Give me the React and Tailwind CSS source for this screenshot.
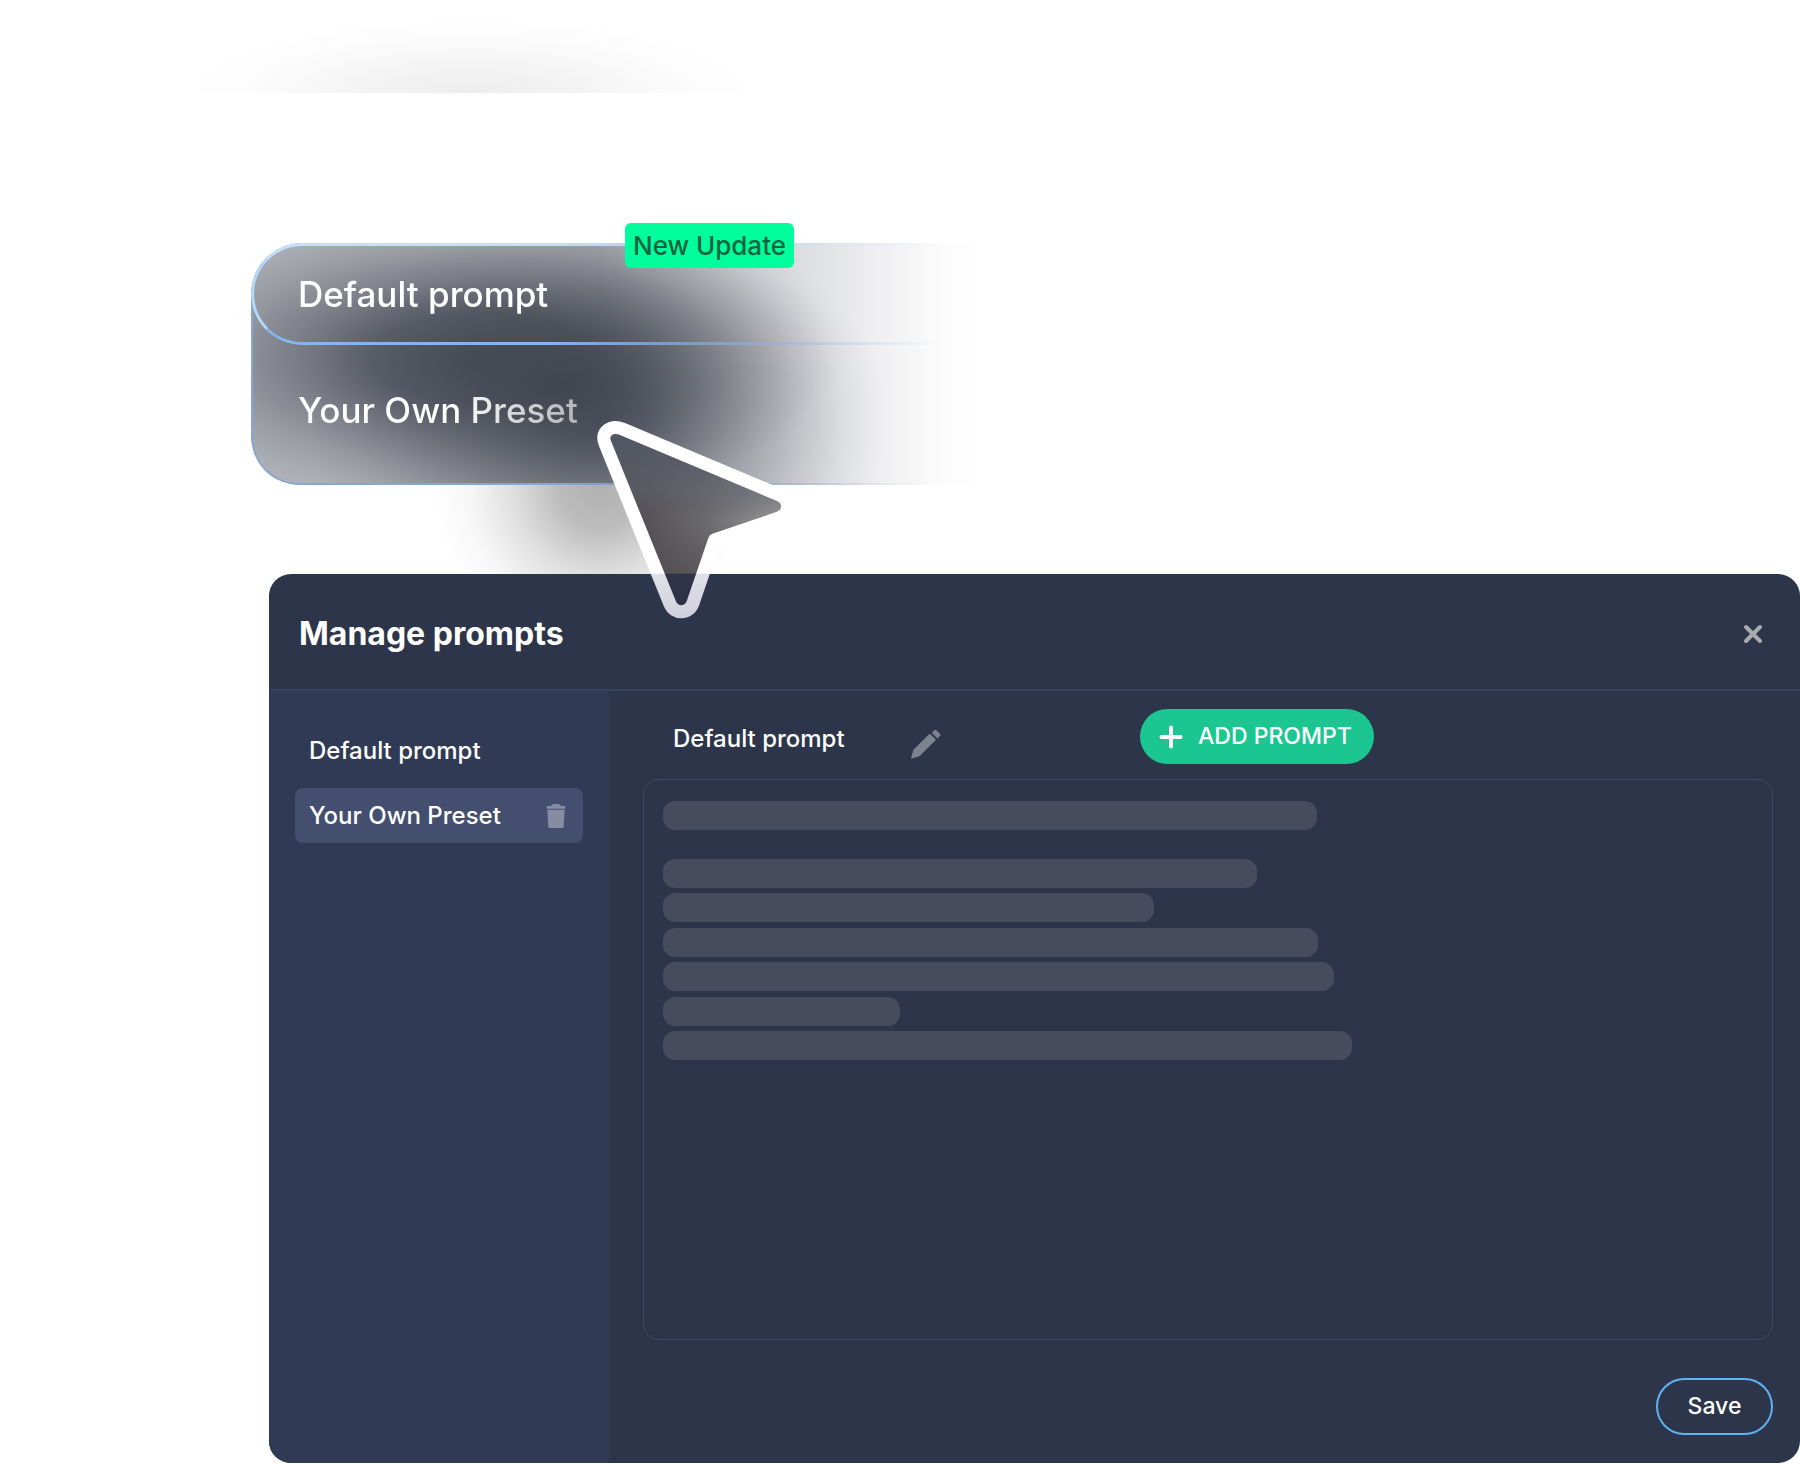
import { useState } from "react";

const presets = ["Default prompt", "Your Own Preset"];

// Placeholder lines for the prompt body, as a share of the editor width
const paragraph = [54.5, 45, 60.1, 61.6, 21.7, 63.2];

function SkeletonLine({ width }) {
  return <div className="h-[29px] rounded-xl bg-[#464b5e]" style={{ width: `${width}%` }} />;
}

function TrashIcon() {
  return (
    <svg width="20" height="24" viewBox="0 0 20 24" fill="#878ba3" aria-hidden="true">
      <path d="M1.500 2H5Q6 .1 7.500 0h5Q14 .1 15 2h3.500q1 0 1 1.300T18.500 4.700h-17Q.5 4.600.5 3.300T1.500 2Z" />
      <path d="M1.300 5.800h17.400l-1 16.600Q17.600 24 16 24H4q-1.600 0-1.700-1.600Z" />
    </svg>
  );
}

function PencilIcon() {
  return (
    <svg width="32" height="32" viewBox="0 0 32 32" fill="#7c838f" aria-hidden="true">
      <path d="M20.500 6.200 26 11.800 10.500 27.300Q9.700 28 8.700 28.400L2 30.600Q.9 30.800 1.200 29.700L3 23Q3.400 22 4 21.300L19 6.200Z" />
      <path d="M21.800 4.800 24.200 2.200Q25.300 1.100 26.400 2.200L30 5.800Q31.100 6.900 30 8L27.400 10.500Z" />
    </svg>
  );
}

function CursorArrow() {
  return (
    <svg
      className="pointer-events-none absolute left-[590px] top-[414px]"
      width="212"
      height="212"
      viewBox="590 414 212 212"
      aria-hidden="true"
    >
      <defs>
        <linearGradient id="arrowFill" gradientUnits="userSpaceOnUse" x1="640" y1="520" x2="785" y2="500">
          <stop offset="0" stopColor="#545156" />
          <stop offset="0.450" stopColor="#6c6b6e" />
          <stop offset="1" stopColor="#9c9c9d" />
        </linearGradient>
        <linearGradient id="arrowShade" gradientUnits="userSpaceOnUse" x1="0" y1="430" x2="0" y2="610">
          <stop offset="0" stopColor="#4f5563" />
          <stop offset="0.350" stopColor="#5c606b" stopOpacity="0.500" />
          <stop offset="0.500" stopColor="#545156" stopOpacity="0" />
          <stop offset="0.795" stopColor="#4c484c" stopOpacity="0.500" />
          <stop offset="0.800" stopColor="#2e3346" />
          <stop offset="1" stopColor="#2c3146" />
        </linearGradient>
        <linearGradient id="arrowStroke" gradientUnits="userSpaceOnUse" x1="0" y1="414" x2="0" y2="620">
          <stop offset="0" stopColor="#fff" />
          <stop offset="0.773" stopColor="#fff" />
          <stop offset="0.777" stopColor="#e0e0e8" />
          <stop offset="1" stopColor="#d0d0dc" />
        </linearGradient>
      </defs>
      <path
        d="M605 443.500 670 604C674.500 614.500 689 614.500 693 603L714.500 540 779 518C790 514 790.500 499.500 779.500 495L622.500 429C611 424.500 600 432 605 443.500Z"
        fill="url(#arrowFill)"
      />
      <path
        d="M605 443.500 670 604C674.500 614.500 689 614.500 693 603L714.500 540 779 518C790 514 790.500 499.500 779.500 495L622.500 429C611 424.500 600 432 605 443.500Z"
        fill="url(#arrowShade)"
        stroke="url(#arrowStroke)"
        strokeWidth="13"
        strokeLinejoin="round"
      />
    </svg>
  );
}

function PresetMenu() {
  return (
    <div className="relative ml-[251px] mr-[800px]">
      {/* Soft dark glow fading out to the right */}
      <div className="absolute inset-0 rounded-l-[51px] bg-[radial-gradient(360px_150px_at_229px_115px,rgba(50,54,66,0.78),rgba(50,54,66,0.68)_30%,rgba(50,54,66,0.4)_54%,rgba(50,54,66,0.18)_74%,rgba(50,54,66,0.07)_88%,transparent),radial-gradient(290px_210px_at_349px_177px,rgba(50,54,66,0.7),rgba(50,54,66,0.64)_15%,rgba(50,54,66,0.46)_35%,rgba(50,54,66,0.3)_52%,rgba(50,54,66,0.15)_70%,rgba(50,54,66,0.05)_85%,transparent),linear-gradient(to_right,rgba(62,66,84,0.4),rgba(62,66,84,0.4)_350px,rgba(62,66,84,0.28)_450px,rgba(62,66,84,0.2)_530px,rgba(62,66,84,0.09)_620px,rgba(62,66,84,0.02)_690px,transparent_730px)]" />
      <div className="absolute inset-x-0 bottom-0 top-[51px] rounded-bl-[48px] border-b-2 border-l-2 border-[#86a7d3] [mask-image:linear-gradient(to_right,black_40%,transparent_90%)]" />
      <div className="relative flex flex-col">
        <button
          type="button"
          className="h-[102px] rounded-l-full border-[3px] border-r-0 border-t-[#c4dfff] border-b-[#86b5ee] border-l-[#b4d7fc] pl-[44px] text-left text-[35px] font-medium text-white [mask-image:linear-gradient(to_right,black_40%,transparent_92%)]"
        >
          Default prompt
        </button>
        <button type="button" className="h-[140px] pb-[9px] pl-[47px] text-left text-[35px] font-medium">
          <span className="bg-linear-to-r from-white from-55% to-[#b4b5ba] bg-clip-text text-transparent">
            Your Own Preset
          </span>
        </button>
      </div>
      <span className="absolute left-[374px] top-[-20px] flex h-[45px] w-[169px] items-center justify-center rounded-md bg-[#00ff9c] text-[26px] font-medium text-[#07653f]">
        New Update
      </span>
    </div>
  );
}

function ManagePrompts() {
  const [selected, setSelected] = useState("Your Own Preset");

  return (
    <section className="relative ml-[269px] overflow-hidden rounded-[22px] bg-[#2d354a] text-white">
      <header className="flex h-[117px] items-center justify-between border-b-2 border-[#37425f] pl-[30px] pr-[37px] pt-1">
        <h1 className="text-[32px] font-bold">Manage prompts</h1>
        <button type="button" aria-label="Close">
          <svg width="20" height="20" viewBox="0 0 20 20" stroke="#ababae" strokeWidth="4" strokeLinecap="round">
            <path d="M3 3 17 17M17 3 3 17" />
          </svg>
        </button>
      </header>

      <div className="flex">
        <nav className="w-[340px] shrink-0 bg-[#303a55] px-[26px] pt-8">
          <ul className="flex flex-col gap-[10px]">
            {presets.map((name) => (
              <li
                key={name}
                className={`flex h-[55px] items-center rounded-lg pr-[17px] ${
                  name === selected ? "bg-[#444f70]" : ""
                }`}
              >
                <button
                  type="button"
                  className="flex-1 pl-[14px] text-left text-2xl font-medium"
                  onClick={() => setSelected(name)}
                >
                  {name}
                </button>
                {name === selected && (
                  <button type="button" aria-label={`Delete ${name}`}>
                    <TrashIcon />
                  </button>
                )}
              </li>
            ))}
          </ul>
        </nav>

        <main className="min-w-0 flex-1 pb-7 pl-[34px] pr-[27px] pt-[18px]">
          <div className="flex h-[55px] items-center pl-[30px]">
            <h2 className="w-[237px] pt-1 text-2xl font-medium">Default prompt</h2>
            <button type="button" aria-label="Rename prompt" className="pt-[14px]">
              <PencilIcon />
            </button>
            <button
              type="button"
              className="ml-[198px] flex h-[55px] w-[234px] items-center gap-[15px] rounded-full bg-[#1bc690] pl-[19px] text-[23px] font-medium"
            >
              <svg width="24" height="24" viewBox="0 0 24 24" stroke="#fff" strokeWidth="4" strokeLinecap="round">
                <path d="M12 2.500v19M2.500 12h19" />
              </svg>
              ADD PROMPT
            </button>
          </div>

          <div className="mt-[15px] h-[561px] rounded-2xl border border-[#3e4a69] px-[19px] pt-[21px]">
            <SkeletonLine width={60} />
            <div className="mt-[29px] flex h-[201px] flex-col justify-between">
              {paragraph.map((width, i) => (
                <SkeletonLine key={i} width={width} />
              ))}
            </div>
          </div>

          <div className="mt-[38px] flex justify-end">
            <button
              type="button"
              className="h-[57px] w-[117px] rounded-full border-2 border-[#5fb2f0] text-[23px] font-medium"
            >
              Save
            </button>
          </div>
        </main>
      </div>
    </section>
  );
}

export default function App() {
  return (
    <div className="relative bg-white font-['Inter','Open_Sans',sans-serif]">
      <div className="mb-[150px] h-[93px] bg-[radial-gradient(290px_75px_at_470px_100%,#ededed,#f3f3f3_35%,#fbfbfb_70%,#fff)]" />
      {/* Shadow cast under the arrow */}
      <div className="absolute left-[435px] top-[485px] h-[89px] w-[330px] bg-[radial-gradient(165px_170px_at_50%_0,#b0b0b0,#bcbcbc_25%,#dedede_52%,#f6f6f6_78%,#fff)] [mask-image:linear-gradient(to_right,black_75%,transparent_90%)]" />
      <PresetMenu />
      <div className="h-[89px]" />
      <ManagePrompts />
      <CursorArrow />
    </div>
  );
}
